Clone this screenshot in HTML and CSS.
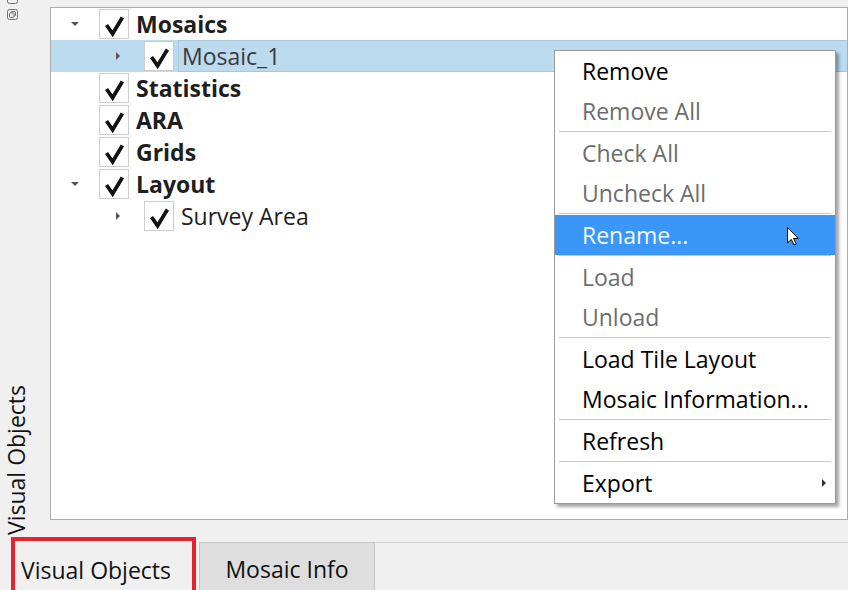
FILE: index.html
```html
<!DOCTYPE html>
<html lang="en">
<head>
    <meta charset="UTF-8">
    <title>Visual Objects</title>
    <link rel="stylesheet" href="styles.css">
</head>
<body>
<div class="window">
    <div class="dock">
        <aside class="dock-side">
            <div class="dock-buttons">
                <svg class="dock-btn" viewBox="0 0 11 11"><rect x="0.5" y="0.5" width="10" height="10" rx="2" fill="none" stroke="#707070"/></svg>
                <svg class="dock-btn" viewBox="0 0 11 11"><rect x="0.5" y="0.5" width="10" height="10" rx="2" fill="none" stroke="#707070"/><rect x="4" y="2.5" width="4.5" height="4.5" rx="1" fill="none" stroke="#707070"/><rect x="2.5" y="4" width="4.5" height="4.5" rx="1" fill="#f0f0f0" stroke="#707070"/></svg>
            </div>
            <div class="dock-title">Visual Objects</div>
        </aside>

        <div class="tree">
            <div class="row">
                <span class="arrow"><i class="arrow-down"></i></span>
                <span class="check"><svg viewBox="0 0 30 30"><polyline points="7,16 13.5,25.5 24,8"/></svg></span>
                <span class="label bold">Mosaics</span>
            </div>
            <div class="row child selected">
                <span class="arrow"><i class="arrow-right"></i></span>
                <span class="check"><svg viewBox="0 0 30 30"><polyline points="7,16 13.5,25.5 24,8"/></svg></span>
                <span class="label current">Mosaic_1</span>
            </div>
            <div class="row">
                <span class="arrow"></span>
                <span class="check"><svg viewBox="0 0 30 30"><polyline points="7,16 13.5,25.5 24,8"/></svg></span>
                <span class="label bold">Statistics</span>
            </div>
            <div class="row">
                <span class="arrow"></span>
                <span class="check"><svg viewBox="0 0 30 30"><polyline points="7,16 13.5,25.5 24,8"/></svg></span>
                <span class="label bold">ARA</span>
            </div>
            <div class="row">
                <span class="arrow"></span>
                <span class="check"><svg viewBox="0 0 30 30"><polyline points="7,16 13.5,25.5 24,8"/></svg></span>
                <span class="label bold">Grids</span>
            </div>
            <div class="row">
                <span class="arrow"><i class="arrow-down"></i></span>
                <span class="check"><svg viewBox="0 0 30 30"><polyline points="7,16 13.5,25.5 24,8"/></svg></span>
                <span class="label bold">Layout</span>
            </div>
            <div class="row child">
                <span class="arrow"><i class="arrow-right"></i></span>
                <span class="check"><svg viewBox="0 0 30 30"><polyline points="7,16 13.5,25.5 24,8"/></svg></span>
                <span class="label">Survey Area</span>
            </div>
        </div>
    </div>

    <div class="tabbar">
        <div class="tab tab-active">Visual Objects</div>
        <div class="tab">Mosaic Info</div>
        <div class="tabbar-rest"></div>
    </div>

    <ul class="menu">
        <li class="item">Remove</li>
        <li class="item disabled">Remove All</li>
        <li class="sep"></li>
        <li class="item disabled">Check All</li>
        <li class="item disabled">Uncheck All</li>
        <li class="sep"></li>
        <li class="item hover">Rename...</li>
        <li class="sep"></li>
        <li class="item disabled">Load</li>
        <li class="item disabled">Unload</li>
        <li class="sep"></li>
        <li class="item">Load Tile Layout</li>
        <li class="item">Mosaic Information...</li>
        <li class="sep"></li>
        <li class="item">Refresh</li>
        <li class="sep"></li>
        <li class="item submenu">Export<i class="sub-arrow"></i></li>
    </ul>

    <svg class="cursor" viewBox="0 0 13 19"><path d="M0.5,0.5 L0.5,16 L4.3,12.4 L7,18 L9.2,17 L6.6,11.5 L11.5,11.5 Z" fill="#fff" stroke="#000" stroke-linejoin="round"/></svg>
</div>
</body>
</html>
```

FILE: styles.css
```css
body {
    margin: 0;
    background: #f0f0f0;
    font-family: "Open Sans", "Noto Sans", sans-serif;
    font-size: 23px;
    color: #1e1e1e;
}
.window {
    width: 848px;
    height: 590px;
    display: flex;
    flex-direction: column;
    position: relative;
    overflow: hidden;
}
.dock {
    height: 537px;
    display: flex;
    flex: none;
}
.dock-side {
    width: 50px;
    flex: none;
    display: flex;
    flex-direction: column;
    justify-content: space-between;
}
.dock-buttons {
    display: flex;
    flex-direction: column;
    gap: 5px;
    margin-top: -7px;
    padding-left: 7px;
}
.dock-btn {
    width: 11px;
    height: 11px;
}
.dock-title {
    writing-mode: vertical-rl;
    transform: rotate(180deg);
    line-height: 32px;
    width: 32px;
    margin-bottom: 2px;
    color: #111;
    white-space: nowrap;
}
.tree {
    flex: 1;
    margin: 7px 0 17px 0;
    background: #fff;
    border: 1px solid #adadad;
}
.row {
    height: 32px;
    display: flex;
    align-items: center;
}
.row.child {
    padding-left: 45px;
}
.row.selected {
    background: #bcdbee;
}
.arrow {
    width: 48px;
    height: 32px;
    flex: none;
    display: flex;
    align-items: center;
    justify-content: center;
}
.arrow-down {
    border-left: 4px solid transparent;
    border-right: 4px solid transparent;
    border-top: 4px solid #555;
}
.arrow-right {
    border-top: 4px solid transparent;
    border-bottom: 4px solid transparent;
    border-left: 4px solid #555;
    margin-left: -4px;
}
.check {
    width: 30px;
    height: 30px;
    box-sizing: border-box;
    flex: none;
    border: 1px solid #cdcdcd;
    background: #fff;
}
.check svg {
    display: block;
    width: 28px;
    height: 28px;
}
.check polyline {
    fill: none;
    stroke: #111;
    stroke-width: 4;
    stroke-linejoin: miter;
}
.label {
    margin-left: 7px;
    line-height: 32px;
    white-space: nowrap;
}
.label.bold {
    font-weight: bold;
}
.label.current {
    flex: 1;
    margin-left: 4px;
    padding-left: 3px;
    height: 30px;
    line-height: 30px;
    border: 1px solid #a6c9df;
    border-right: none;
    color: #3a3a3a;
}
.tabbar {
    flex: 1;
    display: flex;
    align-items: flex-start;
}
.tab {
    box-sizing: border-box;
    height: 60px;
    line-height: 30px;
    white-space: nowrap;
    color: #111;
}
.tab-active {
    width: 185px;
    margin-left: 11px;
    border: 4px solid #e3242b;
    padding: 14px 0 0 6px;
}
.tab:not(.tab-active) {
    width: 176px;
    margin: 5px 0 0 3px;
    border: 1px solid #c6c6c6;
    border-bottom: none;
    background: #dedede;
    padding-top: 11px;
    text-align: center;
}
.tabbar-rest {
    flex: 1;
    margin-top: 5px;
    border-top: 1px solid #d2d2d2;
}
.menu {
    position: absolute;
    left: 554px;
    top: 50px;
    width: 282px;
    box-sizing: border-box;
    margin: 0;
    padding: 0;
    list-style: none;
    background: #fff;
    border: 1px solid #9a9a9a;
    box-shadow: 3px 3px 3px rgba(0, 0, 0, 0.35);
}
.item {
    height: 40px;
    line-height: 40px;
    padding-left: 27px;
    color: #000;
    position: relative;
}
.item.disabled {
    color: #6d6d6d;
}
.item.hover {
    background: #3a97f8;
    color: #f2f8ff;
}
.sep {
    height: 1px;
    margin: 0 4px 1px;
    background: #c8c8c8;
}
.sub-arrow {
    position: absolute;
    right: 9px;
    top: 16px;
    border-top: 4px solid transparent;
    border-bottom: 4px solid transparent;
    border-left: 4px solid #333;
}
.cursor {
    position: absolute;
    left: 787px;
    top: 227px;
    width: 13px;
    height: 19px;
}
```
